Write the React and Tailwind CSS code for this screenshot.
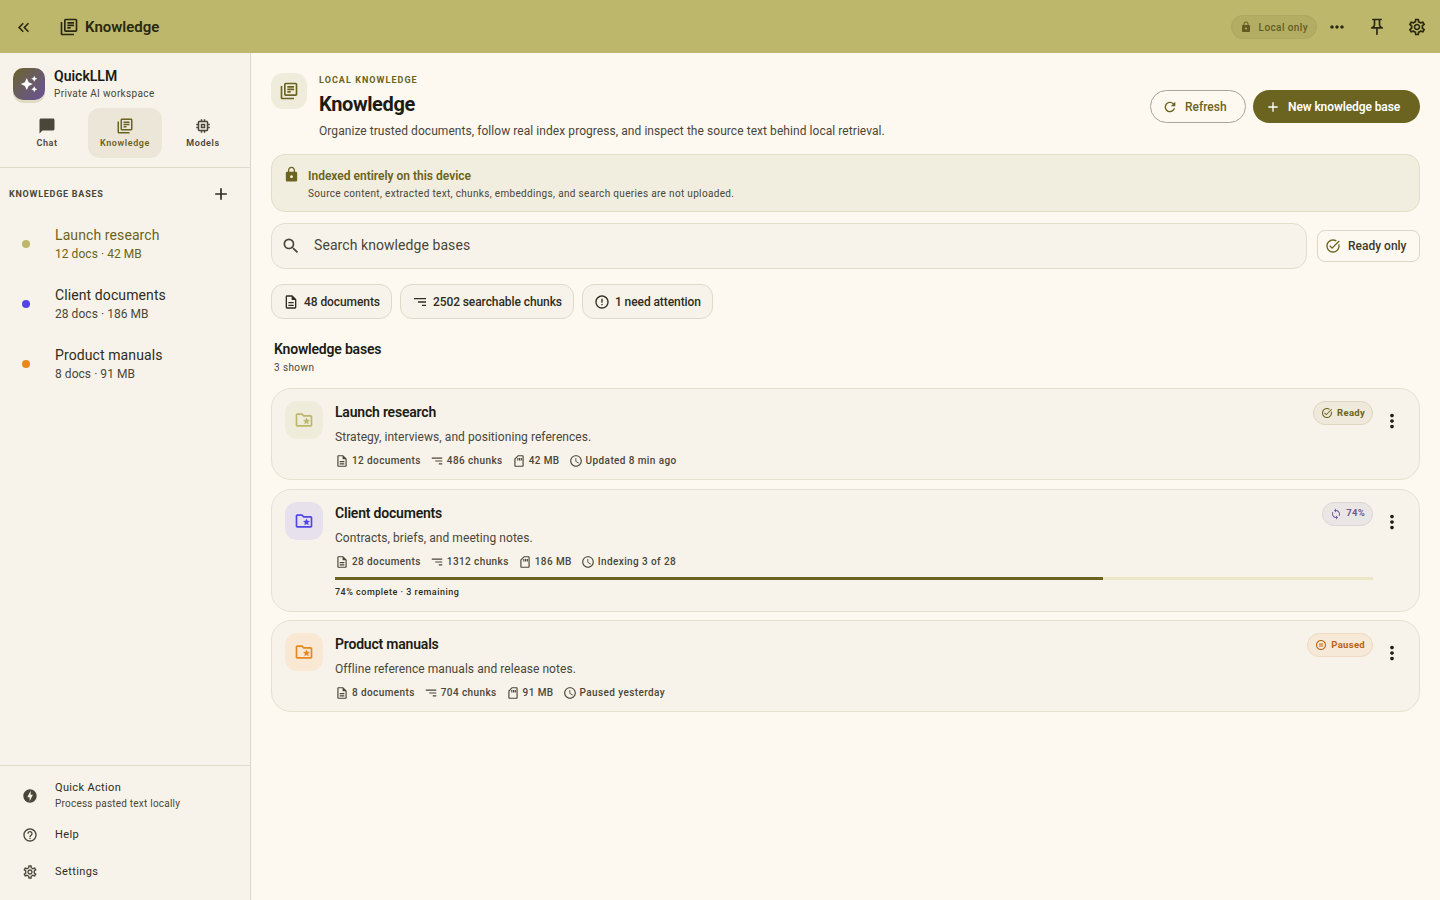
import React from 'react'
import {
  MdAdd, MdAutoAwesome, MdChatBubble, MdErrorOutline, MdHelpOutline, MdKeyboardDoubleArrowLeft, MdLock,
  MdMoreHoriz, MdMoreVert, MdOfflineBolt, MdOutlineDescription, MdOutlineFolderSpecial, MdOutlineLibraryBooks,
  MdOutlineMemory, MdOutlinePauseCircle, MdOutlinePushPin, MdOutlineSchedule, MdOutlineSdStorage, MdOutlineSettings,
  MdOutlineTaskAlt, MdRefresh, MdSearch, MdSort, MdSync,
} from 'react-icons/md'

const navTabs = [
  { icon: MdChatBubble, label: 'Chat' },
  { icon: MdOutlineLibraryBooks, label: 'Knowledge', active: true },
  { icon: MdOutlineMemory, label: 'Models' },
]

const sideBases = [
  { name: 'Launch research', meta: '12 docs · 42 MB', dot: 'bg-[#bdb76b]', active: true },
  { name: 'Client documents', meta: '28 docs · 186 MB', dot: 'bg-[#4f46e5]' },
  { name: 'Product manuals', meta: '8 docs · 91 MB', dot: 'bg-[#e8871e]' },
]

const bases = [
  {
    name: 'Launch research',
    desc: 'Strategy, interviews, and positioning references.',
    docs: '12 documents', chunks: '486 chunks', size: '42 MB', time: 'Updated 8 min ago',
    iconBox: 'bg-[#f0ecdc] text-[#bdb76b]',
    badge: { icon: MdOutlineTaskAlt, label: 'Ready', cls: 'bg-[#eee9da] border-[#dcd6bf] text-[#6b6320]' },
  },
  {
    name: 'Client documents',
    desc: 'Contracts, briefs, and meeting notes.',
    docs: '28 documents', chunks: '1312 chunks', size: '186 MB', time: 'Indexing 3 of 28',
    iconBox: 'bg-[#e6e1ec] text-[#4f46e5]',
    badge: { icon: MdSync, label: '74%', cls: 'bg-[#ebe6e6] border-[#dcd7d6] text-[#6b5b95]' },
    progress: 74,
    progressText: '74% complete · 3 remaining',
  },
  {
    name: 'Product manuals',
    desc: 'Offline reference manuals and release notes.',
    docs: '8 documents', chunks: '704 chunks', size: '91 MB', time: 'Paused yesterday',
    iconBox: 'bg-[#f8e8d4] text-[#e8871e]',
    badge: { icon: MdOutlinePauseCircle, label: 'Paused', cls: 'bg-[#f6e9d8] border-[#eedbc0] text-[#b8650f]' },
  },
]

function SortIcon({ className }) {
  return <MdSort className={`-scale-x-100 ${className}`} />
}

function Meta({ icon: Icon, children }) {
  return (
    <span className="flex items-center gap-[3px]">
      <Icon className="w-[14px] h-[14px] text-[#4a4638]" />
      <span>{children}</span>
    </span>
  )
}

function BaseCard({ base }) {
  const Badge = base.badge.icon
  return (
    <div className="flex gap-3 rounded-[20px] border border-[#e6e1cf] bg-[#f7f3ea] pl-[13px] pr-[15px] pt-[13px] pb-[10px]">
      <div className={`w-[38px] h-[38px] mt-[-1px] shrink-0 rounded-xl grid place-items-center ${base.iconBox}`}>
        <MdOutlineFolderSpecial className="w-5 h-5" />
      </div>
      <div className="flex-1 min-w-0">
        <div className="flex items-start justify-between h-5">
          <div className="text-[14px] leading-[20px] font-semibold tracking-[-0.2px] text-[#1c1b14]">{base.name}</div>
          <span className={`flex items-center gap-[4px] h-6 mt-[-1px] px-[7px] rounded-full border text-[9.5px] font-bold tracking-[0.3px] ${base.badge.cls}`}>
            <Badge className="w-3 h-3" />
            {base.badge.label}
          </span>
        </div>
        <div className="mt-[6px] text-[12px] leading-[18px] tracking-[0.06px] text-[#4a4638]">{base.desc}</div>
        <div className="mt-[7px] flex items-center gap-[9px] text-[10px] leading-[16px] font-medium tracking-[0.4px] text-[#4a4638]">
          <Meta icon={MdOutlineDescription}>{base.docs}</Meta>
          <Meta icon={SortIcon}>{base.chunks}</Meta>
          <Meta icon={MdOutlineSdStorage}>{base.size}</Meta>
          <Meta icon={MdOutlineSchedule}>{base.time}</Meta>
        </div>
        {base.progress != null && (
          <div className="mt-[7px] pb-[1px]">
            <div className="h-[3px] bg-[#ebe6c4]">
              <div className="h-full bg-[#6b6320]" style={{ width: `${base.progress}%` }} />
            </div>
            <div className="mt-[5px] text-[9px] leading-[15px] font-medium tracking-[0.5px] text-[#2f2c20]">{base.progressText}</div>
          </div>
        )}
      </div>
      <button className="w-6 h-6 shrink-0 mt-[7px] ml-[-5px] grid place-items-center text-[#1c1b14]">
        <MdMoreVert className="w-[22px] h-[22px]" />
      </button>
    </div>
  )
}

export default function App() {
  return (
    <div className="h-[900px] w-[1440px] flex flex-col overflow-hidden bg-[#fdf9f1] font-['Roboto',sans-serif] text-[#1c1b14]">
      <header className="h-[53px] shrink-0 flex items-center bg-[#bdb76b] pl-[14px] pr-[13px] pt-[1px]">
        <MdKeyboardDoubleArrowLeft className="w-[19px] h-[19px] text-[#2a2810]" />
        <MdOutlineLibraryBooks className="ml-[26px] w-5 h-5 text-[#2a2810]" />
        <span className="ml-[6px] text-[15px] font-semibold text-[#2a2810]">Knowledge</span>
        <div className="ml-auto flex items-center">
          <span className="flex items-center gap-[7px] h-6 px-2 rounded-full border border-[#aca65f] bg-[#b3ad63] text-[10px] font-medium tracking-[0.4px] text-[#635c20]">
            <MdLock className="w-3 h-3" />
            Local only
          </span>
          <MdMoreHoriz className="ml-[10px] w-[20px] h-[20px] text-[#2a2810]" />
          <MdOutlinePushPin className="ml-[20px] w-5 h-5 text-[#2a2810]" />
          <MdOutlineSettings className="ml-[20px] w-5 h-5 text-[#2a2810]" />
        </div>
      </header>

      <div className="flex-1 flex min-h-0">
        <aside className="w-[251px] shrink-0 flex flex-col bg-[#f7f3ea] border-r border-[#dcd7c4]">
          <div className="h-[115px] shrink-0 border-b border-[#dfdac8] pt-[14px]">
            <div className="flex items-start gap-[9px] px-[13px]">
              <div className="w-8 h-8 mt-[1px] rounded-[10px] grid place-items-center bg-gradient-to-br from-[#6b6320] to-[#6b4f96] shadow-[0_3px_0_#e0dcc4]">
                <MdAutoAwesome className="w-[18px] h-[18px] text-white" />
              </div>
              <div>
                <div className="text-[14px] leading-[18px] font-semibold text-[#1c1b14]">QuickLLM</div>
                <div className="mt-[1px] text-[10px] leading-[16px] tracking-[0.35px] text-[#4a4638]">Private AI workspace</div>
              </div>
            </div>
            <div className="flex gap-1 mt-[6px] px-[10px]">
              {navTabs.map((t) => (
                <div
                  key={t.label}
                  className={`w-[74px] h-[50px] rounded-xl flex flex-col items-center justify-center gap-[1px] ${t.active ? 'bg-[#ebe6d8] text-[#6b6320]' : 'text-[#4a4638]'}`}
                >
                  <t.icon className="w-[18px] h-[18px]" />
                  <span className="text-[9px] leading-[14px] font-semibold tracking-[0.6px]">{t.label}</span>
                </div>
              ))}
            </div>
          </div>

          <div className="flex items-center justify-between pl-[9px] pr-[19px] h-[53px] shrink-0">
            <span className="text-[9px] font-bold tracking-[0.75px] text-[#4a4638]">KNOWLEDGE BASES</span>
            <MdAdd className="w-5 h-5 mt-[-1px] text-[#2f2c20]" />
          </div>

          <div className="flex flex-col gap-[18px] pl-[22px] pt-[2px]">
            {sideBases.map((b) => (
              <div key={b.name} className="flex items-center gap-[25px] h-[42px]">
                <span className={`w-2 h-2 rounded-full ${b.dot}`} />
                <div>
                  <div className={`text-[14px] leading-[20px] tracking-[0.1px] ${b.active ? 'text-[#6b6320]' : 'text-[#2f2c20]'}`}>{b.name}</div>
                  <div className={`text-[12px] leading-[18px] tracking-[0.05px] ${b.active ? 'text-[#6b6320]' : 'text-[#4a4638]'}`}>{b.meta}</div>
                </div>
              </div>
            ))}
          </div>

          <div className="mt-auto h-[135px] shrink-0 border-t border-[#dfdac8] pl-[22px] pt-[14px] text-[#2f2c20]">
            <div className="flex items-center gap-[17px]">
              <MdOfflineBolt className="w-4 h-4 text-[#4a4638]" />
              <div>
                <div className="text-[11px] leading-[16px] tracking-[0.35px]">Quick Action</div>
                <div className="text-[10px] leading-[16px] tracking-[0.22px] text-[#4a4638]">Process pasted text locally</div>
              </div>
            </div>
            <div className="mt-[15px] flex items-center gap-[17px] h-4">
              <MdHelpOutline className="w-4 h-4 text-[#4a4638]" />
              <span className="text-[11px] tracking-[0.4px]">Help</span>
            </div>
            <div className="mt-[21px] flex items-center gap-[17px] h-4">
              <MdOutlineSettings className="w-4 h-4 text-[#4a4638]" />
              <span className="text-[11px] tracking-[0.4px]">Settings</span>
            </div>
          </div>
        </aside>

        <main className="flex-1 min-w-0 px-5 pt-5">
          <div className="flex items-start">
            <div className="w-9 h-9 rounded-xl grid place-items-center bg-[#f0ecdc] text-[#6b6320]">
              <MdOutlineLibraryBooks className="w-5 h-5" />
            </div>
            <div className="ml-3 flex-1">
              <div className="text-[9px] leading-[14px] font-bold tracking-[1.05px] text-[#6b6320]">LOCAL KNOWLEDGE</div>
              <div className="mt-[4px] text-[20px] leading-[26px] font-bold tracking-[-0.4px] text-[#1c1b14]">Knowledge</div>
              <div className="mt-[5px] text-[12px] leading-[18px] tracking-[0.06px] text-[#4a4638]">
                Organize trusted documents, follow real index progress, and inspect the source text behind local retrieval.
              </div>
            </div>
            <div className="flex items-center gap-[7px] mt-[17px]">
              <button className="h-[33px] w-[96px] flex items-center gap-[7px] pl-[11px] rounded-full border border-[#a8a595] text-[12px] font-medium text-[#6b6320]">
                <MdRefresh className="w-4 h-4" />
                Refresh
              </button>
              <button className="h-[33px] w-[167px] flex items-center gap-[7px] pl-3 rounded-full bg-[#6b6320] text-[12px] font-semibold tracking-[-0.1px] text-white">
                <MdAdd className="w-4 h-4" />
                New knowledge base
              </button>
            </div>
          </div>

          <div className="mt-[14px] h-[58px] flex gap-2 rounded-[14px] border border-[#e3dec5] bg-[#f1eddf] pl-[11px] pt-[12px]">
            <MdLock className="w-[17px] h-[17px] mt-[-1px] text-[#6b6320]" />
            <div>
              <div className="text-[12px] leading-[18px] font-semibold text-[#6b6320]">Indexed entirely on this device</div>
              <div className="mt-[1px] text-[10px] leading-[16px] tracking-[0.33px] text-[#4a4638]">
                Source content, extracted text, chunks, embeddings, and search queries are not uploaded.
              </div>
            </div>
          </div>

          <div className="mt-[11px] flex items-center gap-[10px]">
            <div className="flex-1 h-[46px] flex items-center rounded-[14px] border border-[#e3dec9] bg-[#f7f3ea] pl-[9px] pb-[1px]">
              <MdSearch className="w-5 h-5 text-[#4a4638]" />
              <span className="ml-[13px] text-[14px] tracking-[0.07px] text-[#4a4638]">Search knowledge bases</span>
            </div>
            <button className="h-[32px] w-[103px] flex items-center gap-[7px] pl-[7px] rounded-lg border border-[#dcd7c4] text-[12px] font-medium text-[#3c392c]">
              <MdOutlineTaskAlt className="w-4 h-4 text-[#6b6320]" />
              Ready only
            </button>
          </div>

          <div className="mt-[15px] flex gap-2 text-[12px] font-medium tracking-[-0.08px] text-[#2f2c20]">
            <span className="h-[35px] flex items-center gap-[5px] rounded-xl border border-[#dfdac8] bg-[#f7f3ea] px-[11px]">
              <MdOutlineDescription className="w-4 h-4" />48 documents
            </span>
            <span className="h-[35px] flex items-center gap-[5px] rounded-xl border border-[#dfdac8] bg-[#f7f3ea] px-[11px]">
              <SortIcon className="w-4 h-4" />2502 searchable chunks
            </span>
            <span className="h-[35px] flex items-center gap-[5px] rounded-xl border border-[#dfdac8] bg-[#f7f3ea] px-[11px]">
              <MdErrorOutline className="w-4 h-4" />1 need attention
            </span>
          </div>

          <div className="mt-[20px] pl-[3px]">
            <div className="text-[14px] leading-[20px] font-semibold tracking-[-0.2px] text-[#1c1b14]">Knowledge bases</div>
            <div className="mt-[1px] text-[10px] leading-[16px] tracking-[0.4px] text-[#4a4638]">3 shown</div>
          </div>

          <div className="mt-[12px] flex flex-col gap-[8.5px]">
            {bases.map((b) => <BaseCard key={b.name} base={b} />)}
          </div>
        </main>
      </div>
    </div>
  )
}
